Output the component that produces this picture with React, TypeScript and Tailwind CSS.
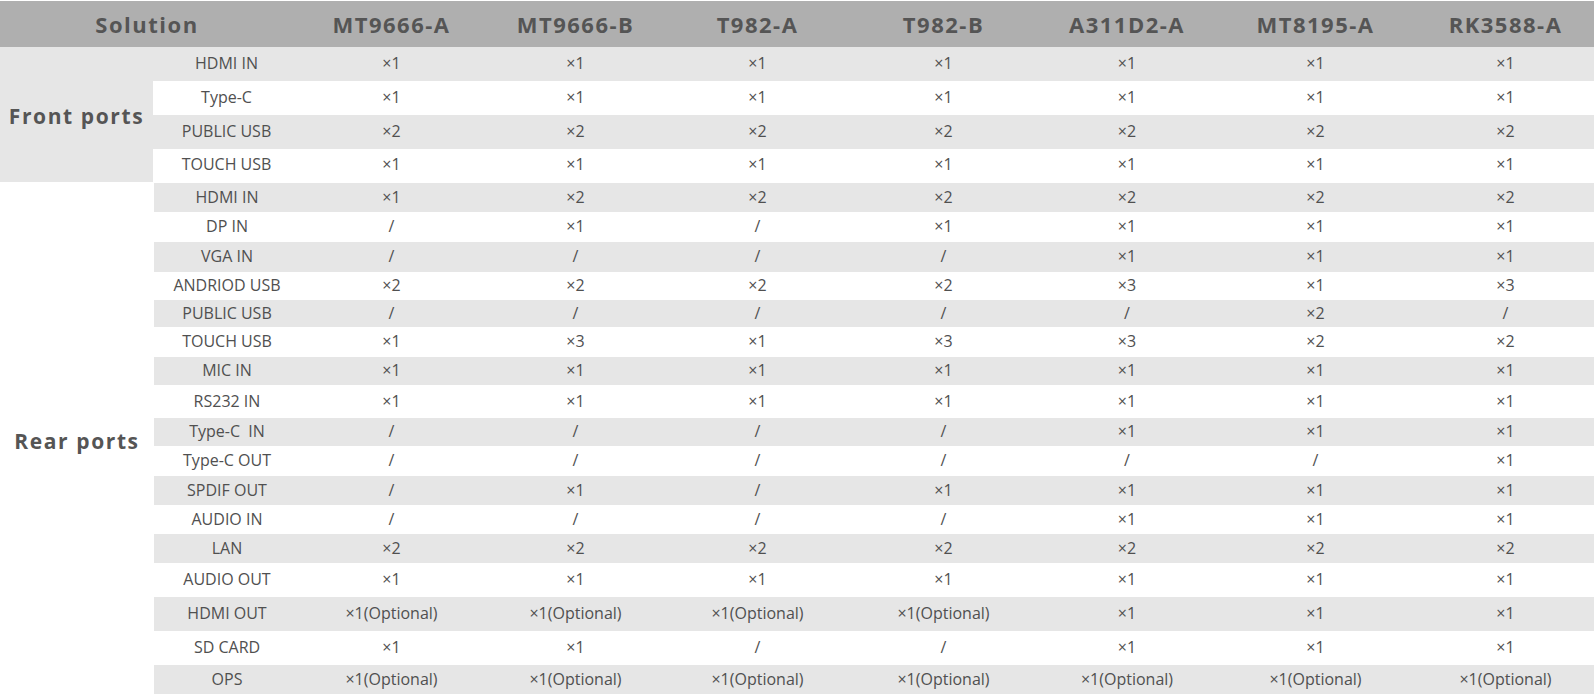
import React from "react";

const cols = ["MT9666-A", "MT9666-B", "T982-A", "T982-B", "A311D2-A", "MT8195-A", "RK3588-A"];
const widths = ["w-[183px]", "w-[185px]", "w-[179px]", "w-[193px]", "w-[174px]", "w-[203px]", "w-[177px]"];

type Row = { label: string; vals: string[]; h: string; gray: boolean };

const all = (v: string) => Array(7).fill(v);
const O = "×1(Optional)";

const front: Row[] = [
  { label: "HDMI IN", vals: all("×1"), h: "h-[34px]", gray: true },
  { label: "Type-C", vals: all("×1"), h: "h-[34px]", gray: false },
  { label: "PUBLIC USB", vals: all("×2"), h: "h-[34px]", gray: true },
  { label: "TOUCH USB", vals: all("×1"), h: "h-[33px]", gray: false },
];

const rear: Row[] = [
  { label: "HDMI IN", vals: ["×1", "×2", "×2", "×2", "×2", "×2", "×2"], h: "h-[29px]", gray: true },
  { label: "DP IN", vals: ["/", "×1", "/", "×1", "×1", "×1", "×1"], h: "h-[30px]", gray: false },
  { label: "VGA IN", vals: ["/", "/", "/", "/", "×1", "×1", "×1"], h: "h-[30px]", gray: true },
  { label: "ANDRIOD USB", vals: ["×2", "×2", "×2", "×2", "×3", "×1", "×3"], h: "h-[28px]", gray: false },
  { label: "PUBLIC USB", vals: ["/", "/", "/", "/", "/", "×2", "/"], h: "h-[27px]", gray: true },
  { label: "TOUCH USB", vals: ["×1", "×3", "×1", "×3", "×3", "×2", "×2"], h: "h-[30px]", gray: false },
  { label: "MIC IN", vals: all("×1"), h: "h-[28px]", gray: true },
  { label: "RS232 IN", vals: all("×1"), h: "h-[33px]", gray: false },
  { label: "Type-C\u00a0 IN", vals: ["/", "/", "/", "/", "×1", "×1", "×1"], h: "h-[28px]", gray: true },
  { label: "Type-C OUT", vals: ["/", "/", "/", "/", "/", "/", "×1"], h: "h-[30px]", gray: false },
  { label: "SPDIF OUT", vals: ["/", "×1", "/", "×1", "×1", "×1", "×1"], h: "h-[29px]", gray: true },
  { label: "AUDIO IN", vals: ["/", "/", "/", "/", "×1", "×1", "×1"], h: "h-[29px]", gray: false },
  { label: "LAN", vals: all("×2"), h: "h-[29px]", gray: true },
  { label: "AUDIO OUT", vals: all("×1"), h: "h-[34px]", gray: false },
  { label: "HDMI OUT", vals: [O, O, O, O, "×1", "×1", "×1"], h: "h-[34px]", gray: true },
  { label: "SD CARD", vals: ["×1", "×1", "/", "/", "×1", "×1", "×1"], h: "h-[34px]", gray: false },
  { label: "OPS", vals: all(O), h: "h-[29px]", gray: true },
];

function DataRow({ r, first, pad }: { r: Row; first: string; pad: string }) {
  return (
    <div className={`flex items-center ${r.h} ${pad} ${r.gray ? "bg-[#e6e6e6]" : "bg-white"}`}>
      <div className={`${first} text-center`}>{r.label}</div>
      {r.vals.map((v, i) => (
        <div key={i} className={`${widths[i]} text-center`}>
          {v}
        </div>
      ))}
    </div>
  );
}

export default function App() {
  return (
    <div
      className="w-[1594px] h-[699px] bg-white pt-[1px] text-[#505050] text-[16px] leading-[20px]"
      style={{ fontFamily: '"Open Sans", "Noto Sans", sans-serif' }}
    >
      <div className="flex items-center h-[46px] bg-[#afafaf] font-bold text-[22px] tracking-[1.5px] text-[#555555]">
        <div className="w-[300px] text-center pr-[6px]">Solution</div>
        {cols.map((c, i) => (
          <div key={c} className={`${widths[i]} text-center`}>
            {c}
          </div>
        ))}
      </div>
      <div className="flex">
        <div className="w-[153px] bg-[#e6e6e6] flex items-center justify-center font-bold text-[21px] tracking-[1.6px] pt-[2px] text-[#555555]">
          Front ports
        </div>
        <div className="flex flex-col">
          {front.map((r) => (
            <DataRow key={r.label} r={r} first="w-[147px]" pad="pb-[3px]" />
          ))}
        </div>
      </div>
      <div className="flex mt-[1px]">
        <div className="w-[154px] flex items-center justify-center font-bold text-[21px] tracking-[1.6px] pt-[5px] text-[#555555]">
          Rear ports
        </div>
        <div className="flex flex-col">
          {rear.map((r) => (
            <DataRow key={r.label + r.h} r={r} first="w-[146px]" pad="pb-[2px]" />
          ))}
        </div>
      </div>
    </div>
  );
}
